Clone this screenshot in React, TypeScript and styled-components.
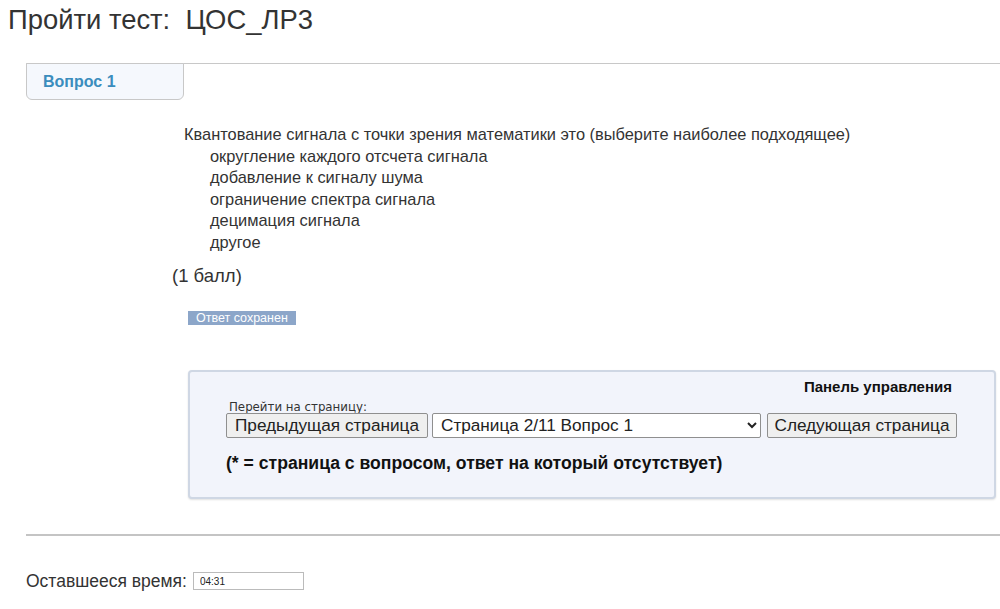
import React from "react";
import styled, { createGlobalStyle } from "styled-components";

const GlobalStyle = createGlobalStyle`
  html, body {
    margin: 0;
    padding: 0;
    background: #ffffff;
  }
  body {
    font-family: "Liberation Sans", Arial, sans-serif;
    color: #333333;
  }
`;

const options = [
  "округление каждого отсчета сигнала",
  "добавление к сигналу шума",
  "ограничение спектра сигнала",
  "децимация сигнала",
  "другое",
];

const App = () => {
  return (
    <>
      <GlobalStyle />
      <Page>
        <Title>Пройти тест:&nbsp; ЦОС_ЛР3</Title>
        <Main>
          <TabBar>
            <Tab>Вопрос 1</Tab>
          </TabBar>
          <Content>
            <Question>
              <QuestionText>
                Квантование сигнала с точки зрения математики это (выберите
                наиболее подходящее)
              </QuestionText>
              {options.map((option) => (
                <Option key={option}>{option}</Option>
              ))}
            </Question>
            <Points>(1 балл)</Points>
            <SavedBadge>Ответ сохранен</SavedBadge>
            <Panel>
              <PanelTitle>Панель управления</PanelTitle>
              <JumpLabel>Перейти на страницу:</JumpLabel>
              <NavRow>
                <NavButton>Предыдущая страница</NavButton>
                <PageSelect defaultValue="2">
                  <option value="2">Страница 2/11 Вопрос 1</option>
                </PageSelect>
                <NavButton>Следующая страница</NavButton>
              </NavRow>
              <Legend>(* = страница с вопросом, ответ на который отсутствует)</Legend>
            </Panel>
          </Content>
          <Divider />
          <TimerRow>
            Оставшееся время:
            <TimerInput readOnly value="04:31" />
          </TimerRow>
        </Main>
      </Page>
    </>
  );
};

const Page = styled.div`
  padding: 4px 0 0 8px;
`;

const Title = styled.h2`
  margin: 0;
  font-size: 27.4px;
  font-weight: normal;
  line-height: 32px;
  color: #333333;
`;

const Main = styled.div`
  margin-left: 18px;
  margin-top: 27px;
`;

const TabBar = styled.div`
  border-top: 1px solid #c8c8c8;
  height: 36px;
`;

const Tab = styled.div`
  box-sizing: border-box;
  width: 158px;
  height: 37px;
  margin-top: -1px;
  padding-left: 16px;
  display: flex;
  align-items: center;
  border: 1px solid #c8c8c8;
  border-radius: 0 0 6px 6px;
  background: #f5f8fd;
  color: #3b8dbd;
  font-size: 16px;
  font-weight: bold;
`;

const Content = styled.div`
  margin-left: 146px;
  padding-top: 24px;
  font-size: 16.4px;
`;

const Question = styled.div`
  padding-left: 12px;
  line-height: 21.6px;
`;

const QuestionText = styled.div``;

const Option = styled.div`
  padding-left: 26px;
`;

const Points = styled.div`
  margin-top: 11px;
  line-height: 21px;
  font-size: 18.5px;
`;

const SavedBadge = styled.span`
  display: inline-block;
  margin: 25px 0 0 16px;
  padding: 0 8px;
  height: 14px;
  line-height: 14px;
  background: #8ca6c9;
  color: #ffffff;
  font-size: 12.5px;
`;

const Panel = styled.div`
  box-sizing: border-box;
  width: 808px;
  margin: 44px 0 0 16px;
  padding: 6px 36px 24px 36px;
  border: 2px solid #cfd7e4;
  border-radius: 4px;
  background: #f2f4fb;
  box-shadow: 0 1px 2px rgba(0, 0, 0, 0.12);
`;

const PanelTitle = styled.div`
  padding-right: 6px;
  text-align: right;
  font-size: 15px;
  font-weight: bold;
  color: #111111;
  line-height: 18px;
`;

const JumpLabel = styled.div`
  margin-top: 5px;
  padding-left: 3px;
  font-family: "DejaVu Sans", Verdana, sans-serif;
  font-size: 11.8px;
  line-height: 12px;
  color: #333333;
`;

const NavRow = styled.div`
  display: flex;
  align-items: center;
  gap: 4px;
`;

const NavButton = styled.button`
  flex-shrink: 0;
  white-space: nowrap;
  height: 25px;
  padding: 0 8px;
  font-family: "Liberation Sans", Arial, sans-serif;
  font-size: 17.2px;
  color: #222222;
  background: #efefef;
  border: 1px solid #8f8f8f;
  border-radius: 2px;

  &:last-child {
    margin-left: 2px;
    padding: 0 6.5px;
  }
`;

const PageSelect = styled.select`
  flex-shrink: 0;
  width: 329px;
  height: 25px;
  padding: 0 4px;
  font-family: "Liberation Sans", Arial, sans-serif;
  font-size: 17.2px;
  color: #222222;
  background: #ffffff;
  border: 1px solid #8f8f8f;
  border-radius: 2px;
`;

const Legend = styled.div`
  margin-top: 15px;
  font-size: 17.6px;
  font-weight: bold;
  color: #111111;
  line-height: 20px;
`;

const Divider = styled.hr`
  margin: 35px 0 0 0;
  border: none;
  border-top: 2px solid #c4c4c4;
`;

const TimerRow = styled.div`
  margin-top: 35px;
  display: flex;
  align-items: center;
  gap: 6px;
  font-size: 17.5px;
  color: #333333;
`;

const TimerInput = styled.input`
  box-sizing: border-box;
  width: 111px;
  height: 18px;
  padding: 0 6px;
  font-family: "Liberation Sans", Arial, sans-serif;
  font-size: 10px;
  color: #222222;
  border: 1px solid #bbbbbb;
  border-radius: 0;
  outline: none;
`;

export default App;
